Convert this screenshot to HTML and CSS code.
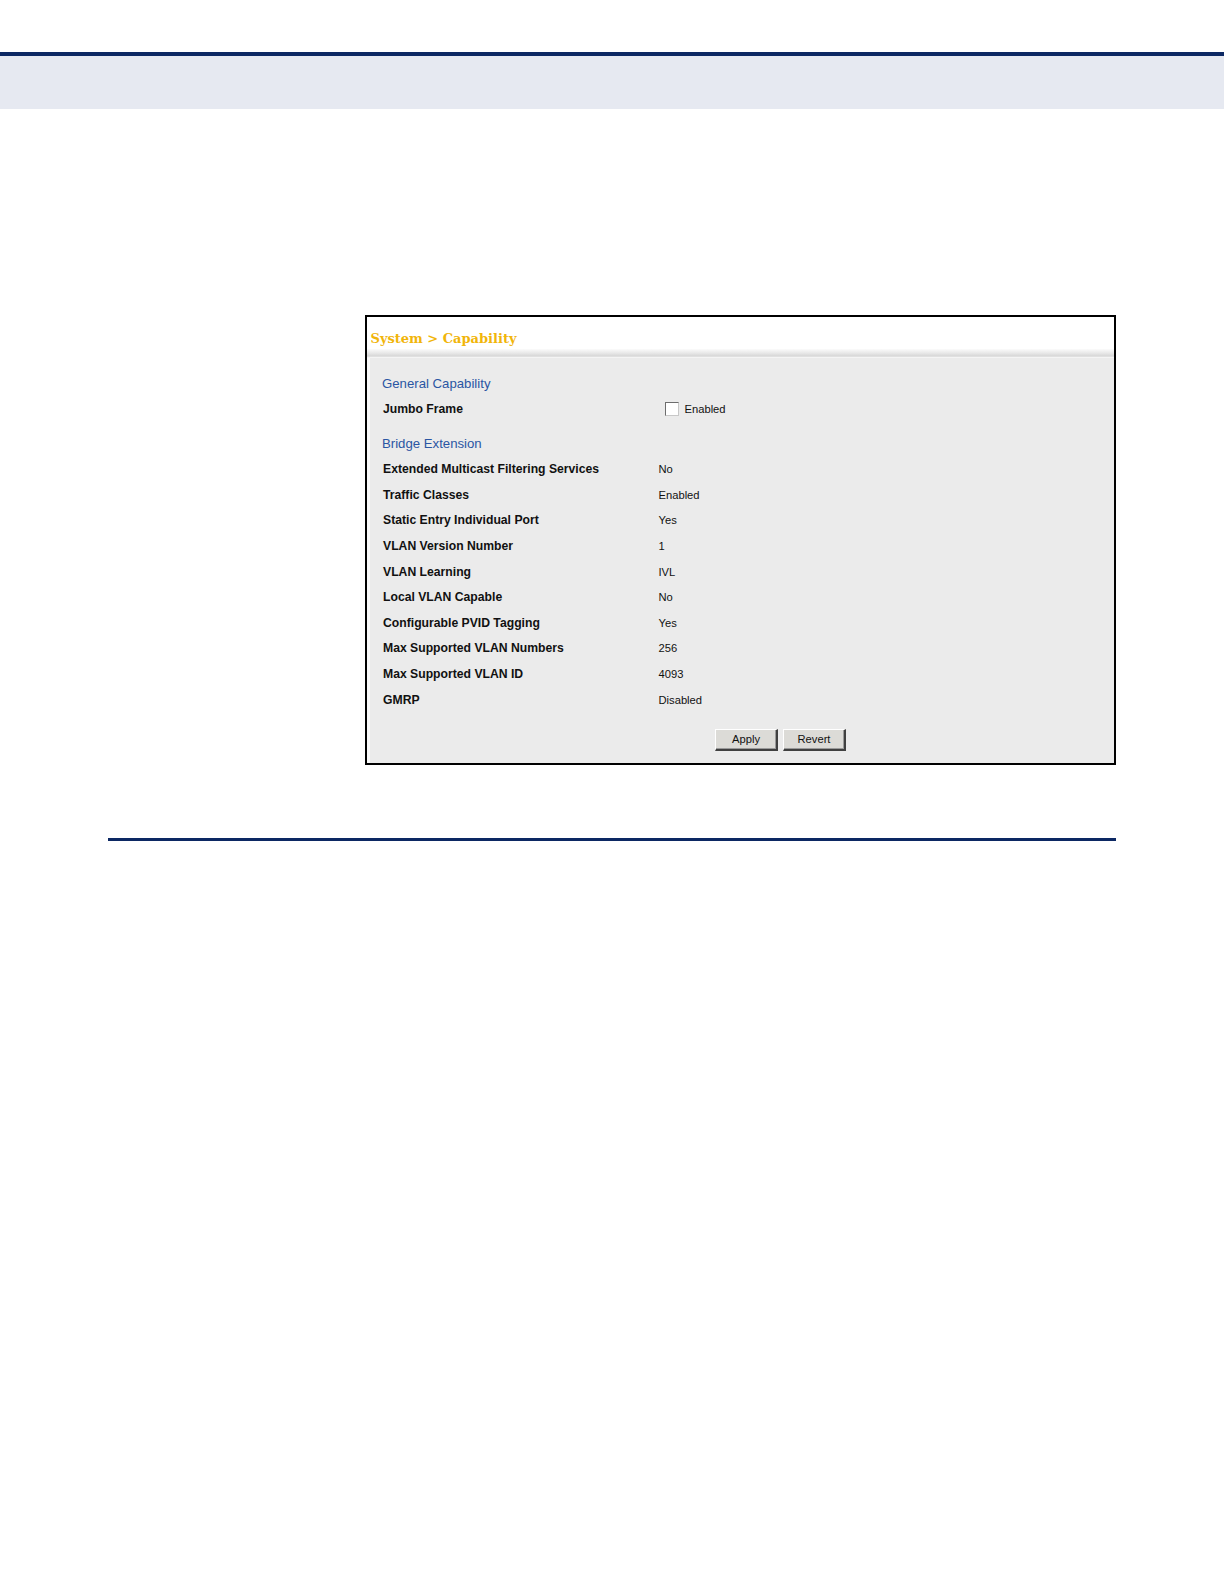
FILE: index.html
```html
<!DOCTYPE html>
<html>
<head>
<meta charset="utf-8">
<title>System Capability</title>
<link rel="stylesheet" href="styles.css">
</head>
<body>
<div class="page">
  <div class="top-rule"></div>
  <div class="top-band"></div>

  <div class="figure">
    <div class="shot">
      <div class="shot-header">
        <span class="crumb">System &gt; Capability</span>
      </div>
      <div class="shot-shadow"></div>
      <div class="shot-body">
        <div class="section-title">General Capability</div>
        <div class="row">
          <div class="label">Jumbo Frame</div>
          <div class="value"><span class="checkbox"></span><span class="check-label">Enabled</span></div>
        </div>

        <div class="section-title section-gap">Bridge Extension</div>
        <div class="row tight"><div class="label">Extended Multicast Filtering Services</div><div class="value">No</div></div>
        <div class="row tight"><div class="label">Traffic Classes</div><div class="value">Enabled</div></div>
        <div class="row tight"><div class="label">Static Entry Individual Port</div><div class="value">Yes</div></div>
        <div class="row tight"><div class="label">VLAN Version Number</div><div class="value">1</div></div>
        <div class="row tight"><div class="label">VLAN Learning</div><div class="value">IVL</div></div>
        <div class="row tight"><div class="label">Local VLAN Capable</div><div class="value">No</div></div>
        <div class="row tight"><div class="label">Configurable PVID Tagging</div><div class="value">Yes</div></div>
        <div class="row tight"><div class="label">Max Supported VLAN Numbers</div><div class="value">256</div></div>
        <div class="row tight"><div class="label">Max Supported VLAN ID</div><div class="value">4093</div></div>
        <div class="row tight"><div class="label">GMRP</div><div class="value">Disabled</div></div>

        <div class="buttons">
          <button class="btn">Apply</button>
          <button class="btn">Revert</button>
        </div>
      </div>
    </div>
  </div>

  <div class="bottom-rule"></div>
</div>
</body>
</html>
```

FILE: styles.css
```css
html, body {
  margin: 0;
  padding: 0;
  background: #ffffff;
}

.page {
  width: 1224px;
  min-height: 1584px;
  padding-top: 52px;
  box-sizing: border-box;
  font-family: "Liberation Sans", Arial, sans-serif;
}

.top-rule {
  height: 4px;
  background: #0c2863;
}

.top-band {
  height: 53px;
  background: #e6e9f1;
}

.figure {
  padding-top: 206px;
  padding-left: 365px;
}

.shot {
  width: 747px;
  border: 2px solid #000000;
  background: #ffffff;
}

.shot-header {
  height: 31.5px;
  background: #ffffff;
  display: flex;
  align-items: flex-end;
  padding-left: 3.5px;
  padding-bottom: 3px;
  box-sizing: border-box;
}

.crumb {
  font-family: "DejaVu Serif", "Liberation Serif", serif;
  font-weight: bold;
  font-size: 13px;
  color: #f1b50a;
  line-height: 14px;
}

.shot-shadow {
  height: 9px;
  background: linear-gradient(to bottom, #fbfbfb 0%, #e8e8e8 45%, #d6d6d6 80%, #f4f4f4 90%, #f4f4f4 100%);
}

.shot-body {
  background: #ebebeb;
  border-left: 3px solid #fafafa;
  padding: 13.5px 0 12px 12px;
}

.section-title {
  height: 25px;
  line-height: 25px;
  font-size: 13.2px;
  color: #2a56a3;
}

.section-gap {
  margin-top: 10.3px;
}

.row {
  display: flex;
  align-items: center;
  height: 25px;
}

.row.tight {
  height: 25.62px;
}

.label {
  width: 275.5px;
  padding-left: 1px;
  font-size: 12.2px;
  font-weight: bold;
  color: #111111;
}

.value {
  display: flex;
  align-items: center;
  font-size: 11.2px;
  color: #111111;
}

.checkbox {
  width: 12px;
  height: 12px;
  margin-left: 6px;
  margin-right: 6px;
  background: #ffffff;
  border-top: 1px solid #6d6d6d;
  border-left: 1px solid #6d6d6d;
  border-right: 1px solid #c8c8c8;
  border-bottom: 1px solid #c8c8c8;
}

.check-label {
  font-size: 11.2px;
}

.buttons {
  display: flex;
  gap: 5px;
  margin-top: 16.4px;
  padding-left: 333px;
}

.btn {
  width: 63px;
  height: 22px;
  padding: 0;
  font-family: "Liberation Sans", Arial, sans-serif;
  font-size: 11.2px;
  color: #111111;
  background: #dcdbd7;
  border-top: 1px solid #ffffff;
  border-left: 1px solid #ffffff;
  border-right: 2px solid #404040;
  border-bottom: 2px solid #404040;
  box-shadow: inset -1px -1px 0 #9a9a9a;
}

.bottom-rule {
  margin-top: 73.5px;
  margin-left: 108px;
  width: 1008px;
  height: 3px;
  background: #0c2863;
}
```
